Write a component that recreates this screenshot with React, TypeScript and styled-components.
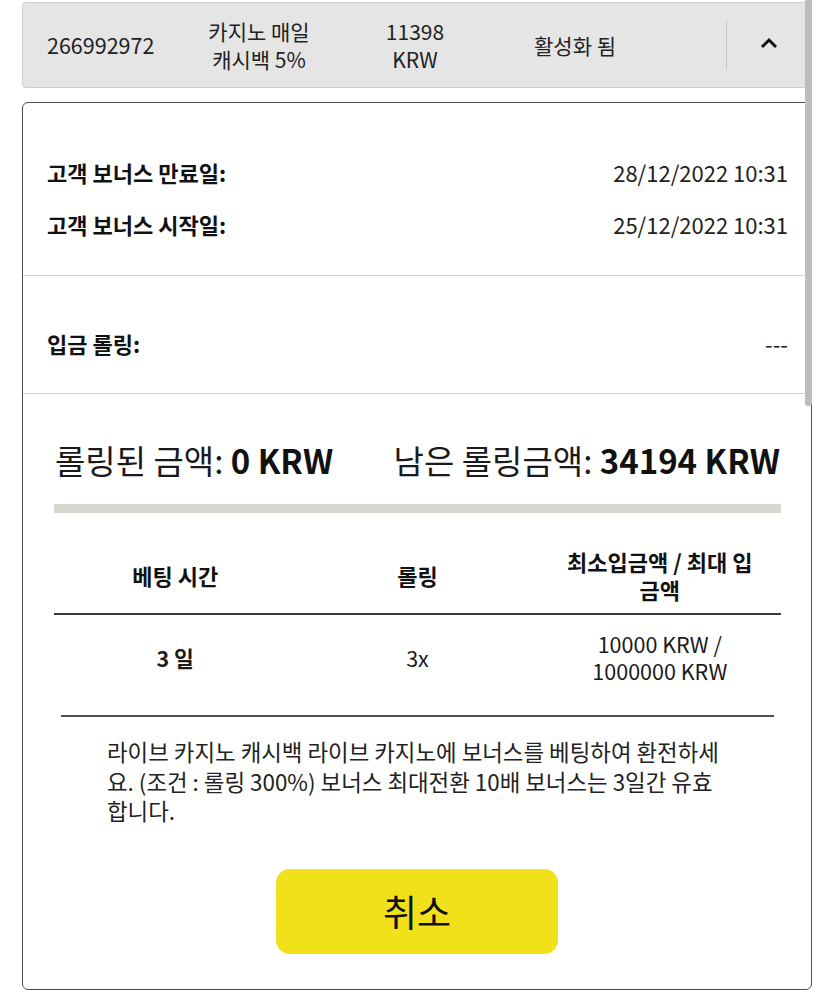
import React from 'react'
import styled, { createGlobalStyle } from 'styled-components'

const GlobalStyle = createGlobalStyle`
  html, body {
    margin: 0;
    padding: 0;
    background: #ffffff;
  }
  body {
    font-family: "Noto Sans CJK KR", "Noto Sans", sans-serif;
    color: #1a1a1a;
  }
`

const summaryRows = [
  { label: '고객 보너스 만료일:', value: '28/12/2022 10:31' },
  { label: '고객 보너스 시작일:', value: '25/12/2022 10:31' },
]

const App = () => {
  return (
    <Page>
      <GlobalStyle />
      <Header>
        <IdCell>266992972</IdCell>
        <HeadCell width={152}>
          <Line>카지노 매일</Line>
          <Line>캐시백 5%</Line>
        </HeadCell>
        <HeadCell width={160}>
          <Line>11398</Line>
          <Line>KRW</Line>
        </HeadCell>
        <HeadCell width={160}>활성화 됨</HeadCell>
        <Spacer />
        <ToggleCell>
          <svg width="18" height="12" viewBox="0 0 18 12">
            <polyline points="2,10 9,3 16,10" fill="none" stroke="#111" strokeWidth="3" />
          </svg>
        </ToggleCell>
      </Header>

      <Panel>
        <Section top={43} bottom={25}>
          {summaryRows.map((r) => (
            <InfoRow key={r.label}>
              <Label>{r.label}</Label>
              <Value>{r.value}</Value>
            </InfoRow>
          ))}
        </Section>
        <Section top={41} bottom={24}>
          <InfoRow>
            <Label>입금 롤링:</Label>
            <Value>---</Value>
          </InfoRow>
        </Section>

        <Rolling>
          <Amount>
            롤링된 금액: <b>0 KRW</b>
          </Amount>
          <Amount>
            남은 롤링금액: <b>34194 KRW</b>
          </Amount>
        </Rolling>
        <ProgressTrack>
          <ProgressFill style={{ width: '0%' }} />
        </ProgressTrack>

        <Table>
          <HeadRow>
            <Th>베팅 시간</Th>
            <Th>롤링</Th>
            <Th>최소입금액 / 최대 입금액</Th>
          </HeadRow>
          <BodyRow>
            <Td bold>3 일</Td>
            <Td>3x</Td>
            <Td>10000 KRW / 1000000 KRW</Td>
          </BodyRow>
        </Table>
        <Rule />

        <Description>
          라이브 카지노 캐시백 라이브 카지노에 보너스를 베팅하여 환전하세요. (조건 : 롤링 300%) 보너스 최대전환 10배 보너스는 3일간 유효합니다.
        </Description>

        <ButtonWrap>
          <CancelButton>취소</CancelButton>
        </ButtonWrap>
      </Panel>
      <ScrollThumb />
    </Page>
  )
}

export default App

const Page = styled.div`
  width: 835px;
  height: 993px;
  padding: 2px 23px 0 22px;
  box-sizing: border-box;
  overflow: hidden;
`

const Header = styled.div`
  height: 86px;
  box-sizing: border-box;
  background: #e5e5e5;
  border: 1px solid #cdcdcd;
  border-radius: 4px;
  display: flex;
  align-items: center;
  padding-left: 24px;
  font-size: 21px;
  line-height: 28px;
  color: #222;
`

const IdCell = styled.div`
  width: 136px;
  font-size: 21.5px;
`

const HeadCell = styled.div<{ width: number }>`
  width: ${({ width }) => width}px;
  text-align: center;
`

const Line = styled.div`
  height: 28px;
`

const Spacer = styled.div`
  flex: 1;
  align-self: stretch;
  border-right: 1px solid #c4c4c4;
  margin: 18px 0;
`

const ToggleCell = styled.div`
  width: 84px;
  display: flex;
  justify-content: center;
  align-items: center;
  padding-bottom: 4px;
`

const Panel = styled.div`
  margin-top: 14px;
  height: 888px;
  box-sizing: border-box;
  border: 1px solid #4d4d4d;
  border-radius: 6px;
  display: flex;
  flex-direction: column;
`

const Section = styled.div<{ top: number; bottom: number }>`
  padding: ${({ top, bottom }) => `${top}px 23px ${bottom}px 24px`};
  border-bottom: 1px solid #d2d2d2;
`

const InfoRow = styled.div`
  height: 52px;
  display: flex;
  align-items: center;
  justify-content: space-between;
  font-size: 22px;
`

const Label = styled.span`
  font-weight: 700;
  color: #111;
`

const Value = styled.span`
  color: #222;
`

const Rolling = styled.div`
  margin: 41px 31px 0 32px;
  display: flex;
  justify-content: space-between;
  align-items: center;
  height: 50px;
`

const Amount = styled.div`
  font-size: 33px;
  color: #1a1a1a;
  b {
    font-weight: 700;
    color: #111;
  }
`

const ProgressTrack = styled.div`
  margin: 19px 30px 0 31px;
  height: 9px;
  background: #d7d7cf;
`

const ProgressFill = styled.div`
  height: 100%;
  background: #f0e11a;
`

const Table = styled.div`
  margin: 24px 30px 0 31px;
`

const HeadRow = styled.div`
  display: grid;
  grid-template-columns: 1fr 1fr 1fr;
  align-items: center;
  min-height: 76px;
  border-bottom: 2px solid #3a3a42;
`

const Th = styled.div`
  text-align: center;
  font-size: 22px;
  line-height: 28px;
  font-weight: 700;
  padding: 0 24px;
  color: #111;
`

const BodyRow = styled.div`
  display: grid;
  grid-template-columns: 1fr 1fr 1fr;
  align-items: center;
  height: 84px;
`

const Td = styled.div<{ bold?: boolean }>`
  text-align: center;
  font-size: 21.5px;
  line-height: 27px;
  font-weight: ${({ bold }) => (bold ? 700 : 400)};
  padding: 0 20px;
  color: #1a1a1a;
`

const Rule = styled.div`
  margin: 16px 37px 0 38px;
  height: 2px;
  background: #50505a;
`

const Description = styled.p`
  margin: 20px 0 0 84px;
  width: 618px;
  font-size: 22.4px;
  line-height: 29.5px;
  color: #222;
`

const ButtonWrap = styled.div`
  display: flex;
  justify-content: center;
  margin-top: 43px;
`

const CancelButton = styled.button`
  width: 282px;
  height: 85px;
  border: none;
  border-radius: 14px;
  background: #f0e11a;
  font-family: "Noto Sans CJK KR", "Noto Sans", sans-serif;
  font-size: 37px;
  color: #111;
  cursor: pointer;
`

const ScrollThumb = styled.div`
  position: fixed;
  top: 0;
  left: 805px;
  width: 7px;
  height: 406px;
  background: #bdbdbd;
  border-radius: 0 0 3px 3px;
`
